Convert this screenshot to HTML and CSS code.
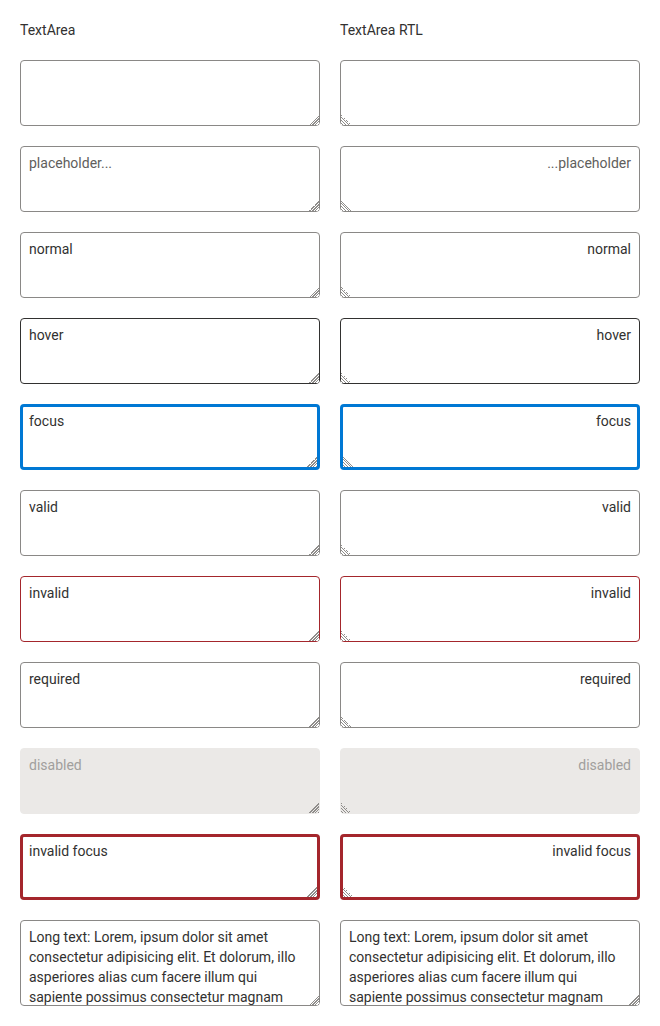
FILE: index.html
```html
<!DOCTYPE html>
<html>
<head>
<meta charset="utf-8">
<link rel="stylesheet" href="styles.css">
</head>
<body>
<div class="page">
  <div class="col">
    <div class="title">TextArea</div>
    <textarea class="ta"></textarea>
    <textarea class="ta" placeholder="placeholder..."></textarea>
    <textarea class="ta">normal</textarea>
    <textarea class="ta hover">hover</textarea>
    <textarea class="ta focus">focus</textarea>
    <textarea class="ta">valid</textarea>
    <textarea class="ta invalid">invalid</textarea>
    <textarea class="ta" required>required</textarea>
    <textarea class="ta" disabled>disabled</textarea>
    <textarea class="ta invalid-focus">invalid focus</textarea>
    <textarea class="ta long">Long text: Lorem, ipsum dolor sit amet consectetur adipisicing elit. Et dolorum, illo asperiores alias cum facere illum qui sapiente possimus consectetur magnam</textarea>
  </div>
  <div class="col">
    <div class="title">TextArea RTL</div>
    <textarea class="ta" dir="rtl"></textarea>
    <textarea class="ta" dir="rtl" placeholder="placeholder..."></textarea>
    <textarea class="ta" dir="rtl">normal</textarea>
    <textarea class="ta hover" dir="rtl">hover</textarea>
    <textarea class="ta focus" dir="rtl">focus</textarea>
    <textarea class="ta" dir="rtl">valid</textarea>
    <textarea class="ta invalid" dir="rtl">invalid</textarea>
    <textarea class="ta" dir="rtl" required>required</textarea>
    <textarea class="ta" dir="rtl" disabled>disabled</textarea>
    <textarea class="ta invalid-focus" dir="rtl">invalid focus</textarea>
    <textarea class="ta long" dir="ltr">Long text: Lorem, ipsum dolor sit amet consectetur adipisicing elit. Et dolorum, illo asperiores alias cum facere illum qui sapiente possimus consectetur magnam</textarea>
  </div>
</div>
</body>
</html>
```
FILE: styles.css
```css
html, body {
  margin: 0;
  padding: 0;
  background: #ffffff;
}
body {
  font-family: Roboto, "Liberation Sans", sans-serif;
  font-size: 14px;
  color: #323130;
}
.page {
  display: grid;
  grid-template-columns: 300px 300px;
  column-gap: 20px;
  padding: 20px;
}
.col {
  display: flex;
  flex-direction: column;
  gap: 20px;
}
.title {
  height: 20px;
  line-height: 20px;
  font-size: 14px;
  color: #323130;
}
.ta {
  --bg: #ffffff;
  display: block;
  box-sizing: border-box;
  width: 300px;
  height: 66px;
  margin: 0;
  padding: 6px 8px;
  border: 1px solid #8a8886;
  border-radius: 4px;
  font-family: Roboto, "Liberation Sans", sans-serif;
  font-size: 14px;
  line-height: 20px;
  color: #323130;
  background: var(--bg);
  outline: none;
  overflow: hidden;
}
.ta::-webkit-resizer {
  background:
    linear-gradient(to bottom right, var(--bg) 50%, transparent 50%) right bottom / 10px 10px no-repeat,
    repeating-linear-gradient(135deg, var(--bg) 0 1px, #8f8d8b 1px 2px) right bottom / 10px 10px no-repeat,
    transparent;
}
.ta[dir="rtl"]::-webkit-resizer {
  background:
    linear-gradient(to bottom left, var(--bg) 50%, transparent 50%) left bottom / 10px 10px no-repeat,
    repeating-linear-gradient(45deg, var(--bg) 0 1px, #8f8d8b 1px 2px) left bottom / 10px 10px no-repeat,
    transparent;
}
.ta::placeholder {
  color: #605e5c;
  opacity: 1;
}
.hover {
  border-color: #323130;
}
.focus {
  border: 3px solid #0078d4;
  padding: 4px 6px;
}
.invalid {
  border-color: #a4262c;
}
.invalid-focus {
  border: 3px solid #a4262c;
  padding: 4px 6px;
}
.ta:disabled {
  --bg: #ebe9e7;
  border-color: #ebe9e7;
  color: #a19f9d;
}
.long {
  height: 86px;
}
```
